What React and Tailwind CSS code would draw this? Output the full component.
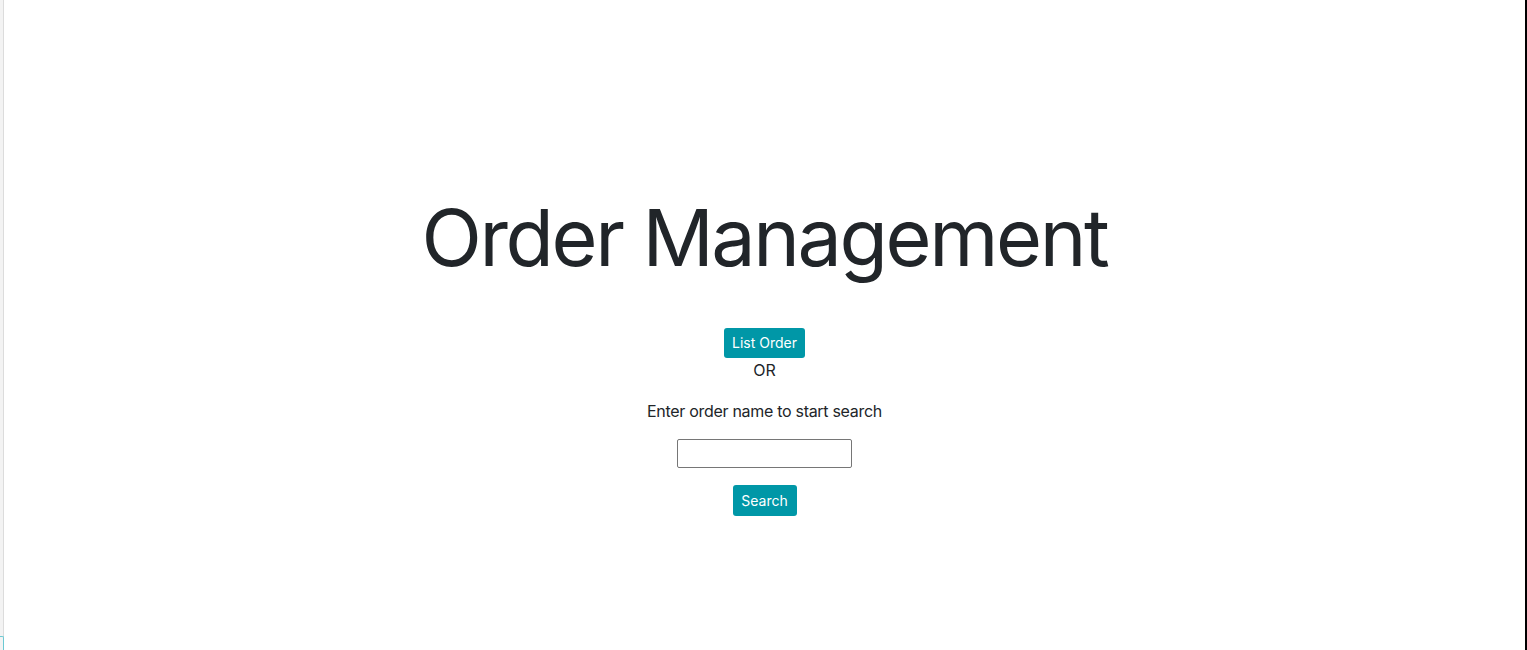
import React from "react";

export default function App() {
  return (
    <div className="relative h-[650px] w-full bg-white font-['Inter',sans-serif] text-[#212529]">
      <div className="flex h-full border-l-[3px] border-l-[#f3f3f3]">
        <div className="flex h-full flex-1 flex-col items-center border-l border-l-[#dcdcdc] border-r-2 border-r-black pt-[189px] text-center">
          <h1 className="text-[79px] font-normal leading-[96px] tracking-[-2.4px]">
            Order Management
          </h1>
          <button className="mt-[43px] h-[30px] rounded-[3px] bg-[#0097a7] px-2 text-sm leading-[30px] text-white">
            List Order
          </button>
          <div className="text-base leading-6">OR</div>
          <p className="mt-[17px] text-base leading-6 tracking-[-0.3px]">
            Enter order name to start search
          </p>
          <input
            type="text"
            className="mt-4 h-[29px] w-[175px] rounded-[2px] border border-[#767676] px-1 text-sm outline-none"
          />
          <button className="mt-[17px] h-[31px] w-[64px] rounded-[3px] bg-[#0097a7] text-sm leading-[31px] text-white">
            Search
          </button>
        </div>
      </div>
      {/* bit of a focused element peeking in at bottom-left */}
      <div className="absolute left-0 top-[636px] h-[14px] w-[4px] rounded-tr-[2px] border-t border-r border-[#6cc9d3]"></div>
    </div>
  );
}
